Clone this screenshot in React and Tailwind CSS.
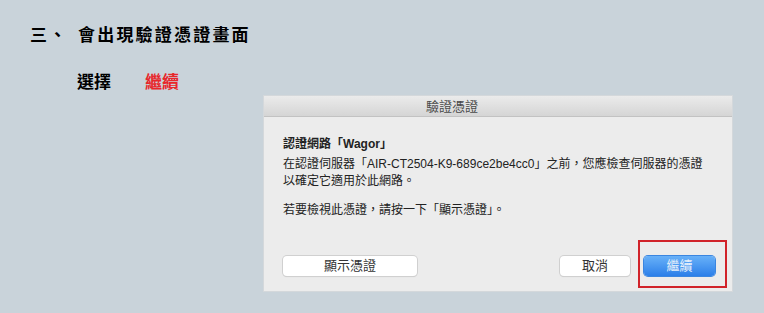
import React from "react";

const cjk = { fontFamily: '"Noto Sans CJK TC", "Noto Sans CJK SC", sans-serif' };
const mac = {
  fontFamily: '"Liberation Sans", "Noto Sans CJK TC", "Noto Sans CJK SC", sans-serif',
};

const Button = ({ children, className }) => (
  <button
    className={`h-[20px] rounded-[4px] text-[13px] leading-[20px] ${className}`}
    style={mac}
  >
    {children}
  </button>
);

const CertDialog = () => (
  <div className="ml-[264px] mt-[3px] w-[468px] bg-[#ececec] shadow-[0_0_0_1px_#d4d8db]" style={mac}>
    {/* Title bar */}
    <div className="h-[21px] border-b border-[#c2c2c2] bg-gradient-to-b from-[#ebebeb] to-[#d5d5d5] pl-[162px] text-[13px] leading-[21px] text-[#4a4a4a]">
      驗證憑證
    </div>

    {/* Body */}
    <div className="px-[19px] pt-[19px] pb-[15px] text-[12px] text-[#222]">
      <p className="font-bold leading-[16px]">認證網路「Wagor」</p>
      <p className="mt-[4px] leading-[17px]">
        在認證伺服器「AIR-CT2504-K9-689ce2be4cc0」之前，您應檢查伺服器的憑證
        <br />
        以確定它適用於此網路。
      </p>
      <p className="mt-[12px] leading-[17px]">若要檢視此憑證，請按一下「顯示憑證」。</p>

      {/* Actions */}
      <div className="mt-[37px] flex items-center">
        <Button className="w-[134px] bg-white text-[#333] shadow-[0_0_0_1px_#d0d0d0,0_1px_1px_rgba(0,0,0,0.15)]">
          顯示憑證
        </Button>
        <div className="flex-1" />
        <Button className="w-[70px] bg-white text-[#333] shadow-[0_0_0_1px_#d0d0d0,0_1px_1px_rgba(0,0,0,0.15)]">
          取消
        </Button>
        <div className="relative ml-[14px] mr-[-2px]">
          <Button className="w-[71px] bg-gradient-to-b from-[#68b1f8] to-[#2b7fe9] text-[#e6f0fb] shadow-[0_0_0_1px_#3b86e0]">
            繼續
          </Button>
          {/* highlight annotation */}
          <div className="pointer-events-none absolute left-[-6px] top-[-16px] h-[48px] w-[89px] border-2 border-[#d1232a]" />
        </div>
      </div>
    </div>
  </div>
);

export default function App() {
  return (
    <div className="h-[313px] w-[764px] overflow-hidden bg-[#c9d3da] text-black" style={cjk}>
      <div className="flex items-center pl-[30px] pt-[22px] text-[17px] font-bold leading-[24px]">
        <span className="tracking-[2px]">三、</span>
        <span className="ml-[10px] tracking-[2.2px]">會出現驗證憑證畫面</span>
      </div>
      <div className="mt-[23px] flex pl-[77px] text-[17px] font-bold leading-[24px]">
        <span>選擇</span>
        <span className="ml-[34px] text-[#e8262b]">繼續</span>
      </div>
      <CertDialog />
    </div>
  );
}
